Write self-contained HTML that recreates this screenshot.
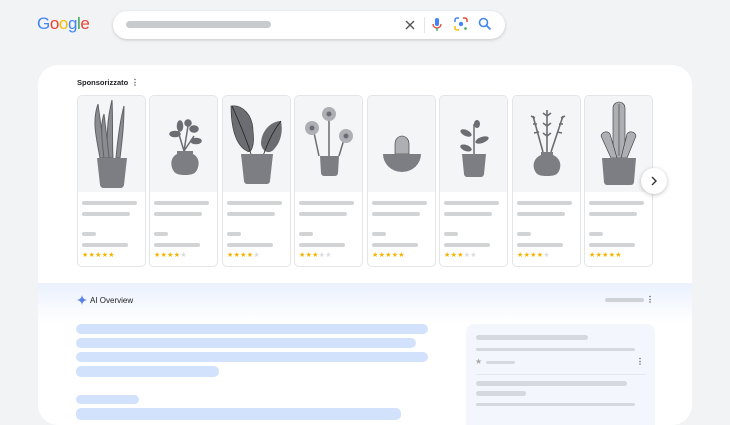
<!DOCTYPE html>
<html><head><meta charset="utf-8"><style>
*{margin:0;padding:0;box-sizing:border-box}
body{width:730px;height:416px;background:#f1f3f4;position:relative;overflow:hidden;font-family:"Liberation Sans",Arial,sans-serif}
.abs{position:absolute}
.logo{left:37px;top:14px;font-size:17px;letter-spacing:-0.4px;font-weight:normal;line-height:20px}
.search{left:113px;top:11px;width:392px;height:28px;background:#fff;border-radius:14px;box-shadow:0 1px 3px rgba(0,0,0,.18)}
.main{left:38px;top:65px;width:654px;height:360px;background:#fff;border-radius:20px;overflow:hidden}
.card{position:absolute;top:30px;width:69px;height:172px;border:1px solid #e3e5e8;border-radius:5px;overflow:hidden;background:#fff}
.img{position:absolute;left:0;top:0;width:100%;height:96px;background:#f4f5f7}
.bar{position:absolute;height:4px;border-radius:2px;background:#d2d3d5}
.stars{position:absolute;left:4px;top:156px;font-size:7px;letter-spacing:0.3px;color:#f5b400;line-height:7px}
.stars span{color:#dadce0}
.ai{left:0;top:218px;width:654px;height:40px;background:linear-gradient(#eaf1fd,#fff)}
.bb{position:absolute;background:#d3e2fc;border-radius:5px}
.gb{position:absolute;background:#d5d9df;border-radius:3px}
</style></head><body>
<div class="abs logo"><span style="color:#4285f4">G</span><span style="color:#ea4335">o</span><span style="color:#fbbc05">o</span><span style="color:#4285f4">g</span><span style="color:#34a853">l</span><span style="color:#ea4335">e</span></div>
<div class="abs search">
 <div class="abs" style="left:13px;top:10px;width:145px;height:7px;background:#c9cacc;border-radius:4px"></div>
 <svg class="abs" style="left:291px;top:8px" width="12" height="12" viewBox="0 0 12 12"><path d="M2 2L10 10M10 2L2 10" stroke="#555" stroke-width="1.4"/></svg>
 <div class="abs" style="left:311px;top:6px;width:1px;height:16px;background:#e5e5e5"></div>
 <svg class="abs" style="left:318px;top:6px" width="12" height="15" viewBox="0 0 12 15"><rect x="4" y="1" width="4" height="8" rx="2" fill="#4285f4"/><path d="M2 7a4 4 0 0 0 8 0" stroke="#ea4335" stroke-width="1.3" fill="none"/><path d="M6 11v3" stroke="#34a853" stroke-width="1.3"/></svg>
 <svg class="abs" style="left:341px;top:6px" width="14" height="14" viewBox="0 0 14 14"><path d="M1 5V3a2 2 0 0 1 2-2h2" stroke="#4285f4" stroke-width="1.5" fill="none"/><path d="M9 1h2a2 2 0 0 1 2 2v2" stroke="#ea4335" stroke-width="1.5" fill="none"/><path d="M1 9v2a2 2 0 0 0 2 2h2" stroke="#fbbc05" stroke-width="1.5" fill="none"/><circle cx="7" cy="7" r="2.2" fill="#4285f4"/><circle cx="11.5" cy="11.5" r="1.3" fill="#34a853"/></svg>
 <svg class="abs" style="left:365px;top:6px" width="14" height="14" viewBox="0 0 14 14"><circle cx="5.5" cy="5.5" r="4" stroke="#4285f4" stroke-width="1.6" fill="none"/><path d="M8.5 8.5L12.5 12.5" stroke="#4285f4" stroke-width="1.8"/></svg>
</div>
<div class="abs main">
 <div class="abs" style="left:39px;top:13px;font-size:7.5px;font-weight:bold;color:#202124">Sponsorizzato</div>
 <div class="abs" style="left:93px;top:13px;font-size:8px;font-weight:bold;color:#444">&#8942;</div>

 <div class="card" style="left:39px"><div class="img"><svg width="68" height="96" viewBox="0 0 68 96"><g fill="#8a8c91" stroke="#5f6166" stroke-width="1"><path d="M22 62C18 40 14 25 20 8C22 25 25 40 27 62Z"/><path d="M30 62C28 40 30 20 34 4C35 25 34 45 35 62Z"/><path d="M38 62C40 40 42 25 46 10C46 30 44 45 42 62Z"/><path d="M26 62C24 45 22 30 26 18C28 35 30 50 31 62Z"/></g><path d="M19 62h30l-3 27a4 4 0 0 1-4 3H26a4 4 0 0 1-4-3Z" fill="#7c7e83"/></svg></div>
  <div class="bar" style="left:4px;top:105px;width:55px"></div><div class="bar" style="left:4px;top:116px;width:48px"></div><div class="bar" style="left:4px;top:136px;width:14px"></div><div class="bar" style="left:4px;top:147px;width:46px"></div><div class="stars">★★★★★</div></div>

 <div class="card" style="left:111px"><div class="img"><svg width="68" height="96" viewBox="0 0 68 96"><g stroke="#6b6d72" stroke-width="1.5" fill="#6b6d72"><path d="M34 55L28 35M34 55L38 30M34 55L44 40" fill="none"/><ellipse cx="25" cy="38" rx="5" ry="2.5"/><ellipse cx="30" cy="30" rx="2.5" ry="5"/><ellipse cx="44" cy="33" rx="4" ry="3"/><ellipse cx="46" cy="45" rx="5" ry="2.5"/><ellipse cx="38" cy="27" rx="3" ry="3"/></g><path d="M27 55h16v3c6 3 7 10 4 16-2 4-6 5-12 5s-10-1-12-5c-3-6-2-13 4-16Z" fill="#7c7e83"/></svg></div>
  <div class="bar" style="left:4px;top:105px;width:55px"></div><div class="bar" style="left:4px;top:116px;width:48px"></div><div class="bar" style="left:4px;top:136px;width:14px"></div><div class="bar" style="left:4px;top:147px;width:46px"></div><div class="stars">★★★★<span>★</span></div></div>

 <div class="card" style="left:184px"><div class="img"><svg width="68" height="96" viewBox="0 0 68 96"><path d="M8 10C20 8 30 20 30 35C32 50 28 58 24 55C14 50 8 35 8 10Z" fill="#6b6d72" stroke="#333" stroke-width=".6"/><path d="M9 10C18 30 24 45 28 58" stroke="#222" stroke-width=".8" fill="none"/><path d="M58 25C48 25 38 35 38 48C40 58 48 58 52 52C58 45 60 35 58 25Z" fill="#6b6d72"/><path d="M58 25C50 35 44 48 40 60" stroke="#222" stroke-width=".8" fill="none"/><path d="M18 58h32l-3 27a3 3 0 0 1-3 3H24a3 3 0 0 1-3-3Z" fill="#7c7e83"/></svg></div>
  <div class="bar" style="left:4px;top:105px;width:55px"></div><div class="bar" style="left:4px;top:116px;width:48px"></div><div class="bar" style="left:4px;top:136px;width:14px"></div><div class="bar" style="left:4px;top:147px;width:46px"></div><div class="stars">★★★★<span>★</span></div></div>

 <div class="card" style="left:256px"><div class="img"><svg width="68" height="96" viewBox="0 0 68 96"><path d="M34 60V20M24 60L18 32M44 60L50 40" stroke="#6b6d72" stroke-width="1.5" fill="none"/><g fill="#adafb4"><circle cx="34" cy="18" r="7"/><circle cx="17" cy="32" r="7"/><circle cx="51" cy="40" r="7"/></g><g fill="#6b6d72"><circle cx="34" cy="18" r="2.5"/><circle cx="17" cy="32" r="2.5"/><circle cx="51" cy="40" r="2.5"/></g><path d="M25 60h19l-1 17a3 3 0 0 1-3 3H29a3 3 0 0 1-3-3Z" fill="#7c7e83"/></svg></div>
  <div class="bar" style="left:4px;top:105px;width:55px"></div><div class="bar" style="left:4px;top:116px;width:48px"></div><div class="bar" style="left:4px;top:136px;width:14px"></div><div class="bar" style="left:4px;top:147px;width:46px"></div><div class="stars">★★★<span>★★</span></div></div>

 <div class="card" style="left:329px"><div class="img"><svg width="68" height="96" viewBox="0 0 68 96"><path d="M27 58V48a7 8 0 0 1 14 0v10Z" fill="#adafb4" stroke="#333" stroke-width=".6"/><path d="M15 58h38a19 18 0 0 1-38 0Z" fill="#7c7e83"/></svg></div>
  <div class="bar" style="left:4px;top:105px;width:55px"></div><div class="bar" style="left:4px;top:116px;width:48px"></div><div class="bar" style="left:4px;top:136px;width:14px"></div><div class="bar" style="left:4px;top:147px;width:46px"></div><div class="stars">★★★★★</div></div>

 <div class="card" style="left:401px"><div class="img"><svg width="68" height="96" viewBox="0 0 68 96"><path d="M34 58V28" stroke="#6b6d72" stroke-width="1.5"/><g fill="#6b6d72"><ellipse cx="26" cy="37" rx="6" ry="3" transform="rotate(25 26 37)"/><ellipse cx="26" cy="52" rx="6" ry="3" transform="rotate(20 26 52)"/><ellipse cx="42" cy="44" rx="7" ry="3" transform="rotate(-20 42 44)"/><ellipse cx="37" cy="28" rx="3" ry="4"/></g><path d="M22 58h24l-2 20a3 3 0 0 1-3 3H27a3 3 0 0 1-3-3Z" fill="#7c7e83"/></svg></div>
  <div class="bar" style="left:4px;top:105px;width:55px"></div><div class="bar" style="left:4px;top:116px;width:48px"></div><div class="bar" style="left:4px;top:136px;width:14px"></div><div class="bar" style="left:4px;top:147px;width:46px"></div><div class="stars">★★★<span>★★</span></div></div>

 <div class="card" style="left:474px"><div class="img"><svg width="68" height="96" viewBox="0 0 68 96"><g stroke="#6b6d72" stroke-width="1.6" fill="none"><path d="M34 56V14M30 56L20 20M38 56L50 20"/><path d="M34 20l-4-3M34 20l4-3M34 30l-4-3M34 30l4-3M34 40l-4-3M34 40l4-3M24 28l-4 0M26 36l-5 1M46 28l4 0M44 36l5 1M22 22l-4-2M48 22l4-2"/></g><path d="M28 56h12v3c7 3 9 10 6 16-2 4-5 5-12 5s-10-1-12-5c-3-6-1-13 6-16Z" fill="#7c7e83"/></svg></div>
  <div class="bar" style="left:4px;top:105px;width:55px"></div><div class="bar" style="left:4px;top:116px;width:48px"></div><div class="bar" style="left:4px;top:136px;width:14px"></div><div class="bar" style="left:4px;top:147px;width:46px"></div><div class="stars">★★★★<span>★</span></div></div>

 <div class="card" style="left:546px"><div class="img"><svg width="68" height="96" viewBox="0 0 68 96"><path d="M28 62V12a6 6 0 0 1 12 0v50Z" fill="#adafb4" stroke="#333" stroke-width=".6"/><path d="M34 8V60" stroke="#333" stroke-width=".6"/><path d="M26 62L16 40a5 5 0 0 1 9-2l7 24Z" fill="#adafb4" stroke="#333" stroke-width=".6"/><path d="M42 62L51 40a5 5 0 0 0-9-2l-6 24Z" fill="#adafb4" stroke="#333" stroke-width=".6"/><path d="M17 62h34l-2 24a3 3 0 0 1-3 3H22a3 3 0 0 1-3-3Z" fill="#7c7e83"/></svg></div>
  <div class="bar" style="left:4px;top:105px;width:55px"></div><div class="bar" style="left:4px;top:116px;width:48px"></div><div class="bar" style="left:4px;top:136px;width:14px"></div><div class="bar" style="left:4px;top:147px;width:46px"></div><div class="stars">★★★★★</div></div>

 <div class="abs" style="left:603px;top:103px;width:26px;height:26px;border-radius:50%;background:#fff;box-shadow:0 1px 4px rgba(0,0,0,.25)"><svg class="abs" style="left:9px;top:8px" width="8" height="10" viewBox="0 0 8 10"><path d="M2 1l4 4-4 4" stroke="#333" stroke-width="1.4" fill="none"/></svg></div>

 <div class="abs ai">
  <svg class="abs" style="left:39px;top:12px" width="10" height="10" viewBox="0 0 10 10"><path d="M5 0C5.5 3 7 4.5 10 5C7 5.5 5.5 7 5 10C4.5 7 3 5.5 0 5C3 4.5 4.5 3 5 0Z" fill="#5b7fe8"/></svg>
  <div class="abs" style="left:52px;top:13px;font-size:8px;color:#202124">AI Overview</div>
  <div class="abs" style="left:567px;top:15px;width:39px;height:4px;border-radius:2px;background:#cfd2d6"></div>
  <div class="abs" style="left:608px;top:12px;font-size:8px;font-weight:bold;color:#444">&#8942;</div>
 </div>
 <div class="bb" style="left:38px;top:259px;width:352px;height:10px"></div>
 <div class="bb" style="left:38px;top:273px;width:340px;height:10px"></div>
 <div class="bb" style="left:38px;top:287px;width:352px;height:10px"></div>
 <div class="bb" style="left:38px;top:301px;width:143px;height:11px"></div>
 <div class="bb" style="left:38px;top:330px;width:63px;height:9px"></div>
 <div class="bb" style="left:38px;top:343px;width:325px;height:12px"></div>
 <div class="abs" style="left:428px;top:259px;width:189px;height:120px;background:#f3f6fc;border-radius:8px">
  <div class="gb" style="left:10px;top:11px;width:112px;height:5px"></div>
  <div class="gb" style="left:10px;top:24px;width:159px;height:3px"></div>
  <div class="abs" style="left:9px;top:33px;font-size:8px;color:#aaa">★</div>
  <div class="gb" style="left:20px;top:37px;width:29px;height:3px"></div>
  <div class="abs" style="left:170px;top:33px;font-size:8px;font-weight:bold;color:#555">&#8942;</div>
  <div class="abs" style="left:10px;top:50px;width:170px;height:1px;background:#e5e9f0"></div>
  <div class="gb" style="left:10px;top:57px;width:151px;height:5px"></div>
  <div class="gb" style="left:10px;top:67px;width:50px;height:5px"></div>
  <div class="gb" style="left:10px;top:79px;width:159px;height:3px"></div>
 </div>
</div>
</body></html>
